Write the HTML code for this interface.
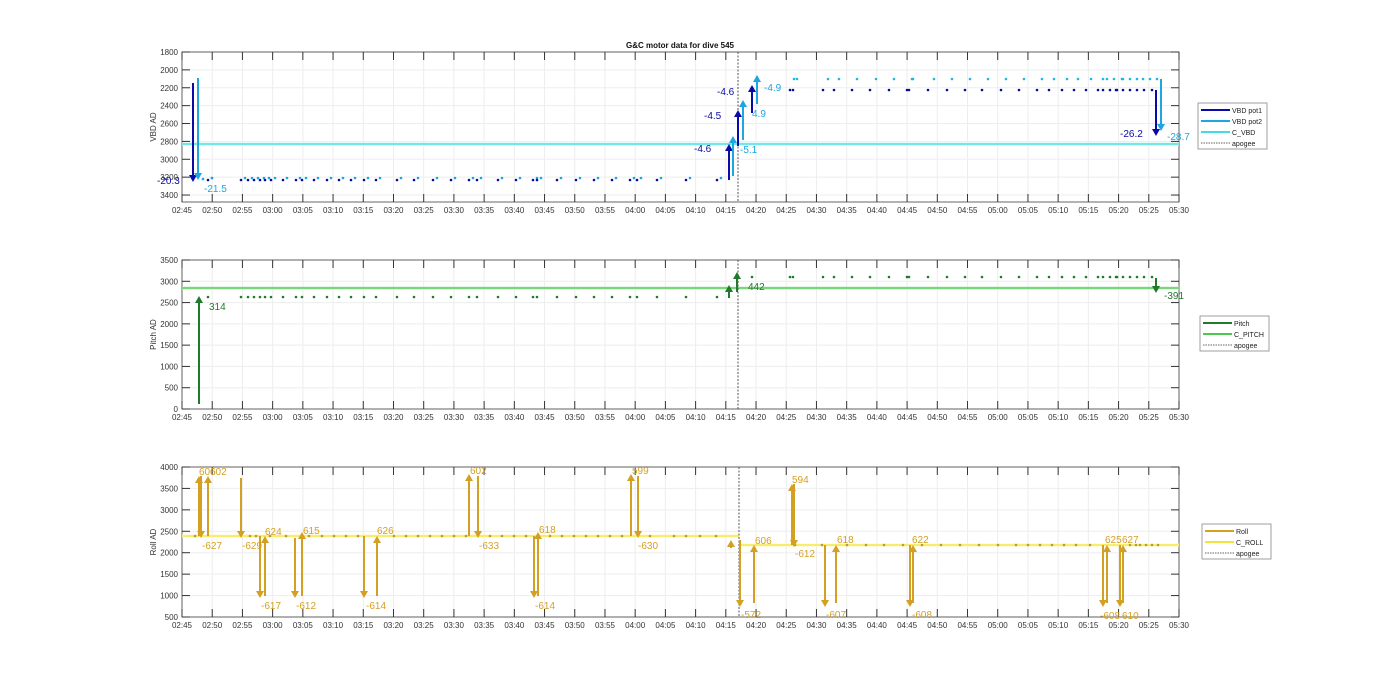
<!DOCTYPE html>
<html><head><meta charset="utf-8"><style>
html,body{margin:0;padding:0;background:#fff;}
svg{display:block;font-family:"Liberation Sans",sans-serif;}
</style></head><body>
<svg id="s" width="1400" height="693" viewBox="0 0 1400 693" xmlns="http://www.w3.org/2000/svg"></svg>
<script>
var S=document.getElementById('s'),h='';
var X0=182,X1=1179,PM=(X1-X0)/165;
function ln(x1,y1,x2,y2,c,w,extra){h+='<line x1="'+x1+'" y1="'+y1+'" x2="'+x2+'" y2="'+y2+'" stroke="'+c+'" stroke-width="'+w+'" '+(extra||'')+'/>';}
function tx(x,y,t,c,sz,extra){h+='<text x="'+x+'" y="'+y+'" fill="'+c+'" font-size="'+sz+'" '+(extra||'')+'>'+t+'</text>';}
function panel(top,bot,yt,ylab){
  for(var i=0;i<=33;i++){var x=X0+i*5*PM;ln(x,top,x,bot,'#ededed',1);}
  yt.forEach(function(t){ln(X0,t[1],X1,t[1],'#ededed',1);});
  h+='<rect x="'+X0+'" y="'+top+'" width="'+(X1-X0)+'" height="'+(bot-top)+'" fill="none" stroke="#262626" stroke-width="1" opacity="0.7"/>';
  for(var i=0;i<=33;i++){var x=X0+i*5*PM;ln(x,bot,x,bot-8,'#333',1);ln(x,top,x,top+8,'#333',1);
    var m=165+i*5,hh=Math.floor(m/60),mm=m%60;
    tx(x,bot+11,'0'+hh+':'+(mm<10?'0':'')+mm,'#333',8,'text-anchor="middle"');}
  yt.forEach(function(t){ln(X0,t[1],X0+8,t[1],'#333',1);ln(X1,t[1],X1-8,t[1],'#333',1);tx(X0-4,t[1]+3,t[0],'#333',8,'text-anchor="end"');});
  tx(156,(top+bot)/2,ylab,'#333',8,'text-anchor="middle" transform="rotate(-90 156 '+(top+bot)/2+')"');
}
function arrow(x,y1,y2,c,label,lx,ly){
  var d=y2<y1?1:-1;ln(x,y1,x,y2+d*6,c,2);
  h+='<polygon points="'+(x-4)+','+(y2+d*7)+' '+(x+4)+','+(y2+d*7)+' '+x+','+y2+'" fill="'+c+'"/>';
  if(label)tx(lx,ly,label,c,10);
}
function dot(x,y,c){h+='<circle cx="'+x+'" cy="'+y+'" r="1.3" fill="'+c+'"/>';}
var early=[208,241,248,254,260,265,271,283,296,302,314,327,339,351,364,376,397,414,433,451,469,477,498,516,533,537,557,576,594,612,630,637,657,686,717];
var late1=[790,793,823,834,852,870,889,907,909,928,947,965,982,1001,1019,1037,1049,1062,1074,1086,1098,1103,1110,1116,1117,1123,1130,1137,1144,1152];
var late2=[794,797,828,839,857,876,894,912,913,934,952,970,988,1006,1024,1042,1054,1067,1078,1091,1103,1107,1114,1122,1123,1130,1137,1143,1150,1157];
tx(680,48,'G&amp;C motor data for dive 545','#111',8,'text-anchor="middle" font-weight="bold"');
var yt1=[];for(var v=1800;v<=3400;v+=200)yt1.push([v,52+(v-1800)*0.0894]);
panel(52,202,yt1,'VBD AD');
ln(X0,144,X1,144,'#c8f6f7',3);ln(X0,144,X1,144,'#3fdde4',1.2);
ln(738,52,738,202,'#555',1,'stroke-dasharray="2,1.5"');
early.forEach(function(x){dot(x,180,'#0a0a9a');dot(x+4,178,'#19a6e0');});
dot(203,179,'#19a6e0');dot(212,178,'#19a6e0');
late1.forEach(function(x){dot(x,90,'#0a0a9a');});
late2.forEach(function(x){dot(x,79,'#19b8e8');});
arrow(193,83,182,'#0a0aa8','-20.3',157,184);
arrow(198,78,180,'#1ea6e0','-21.5',204,192);
arrow(729,180,144,'#0a0aa8','-4.6',694,152);
arrow(733,176,136,'#1ea6e0','-5.1',740,153);
arrow(738,146,110,'#0a0aa8','-4.5',704,119);
arrow(743,140,100,'#1ea6e0','4.9',752,117);
arrow(752,113,85,'#0a0aa8','-4.6',717,95);
arrow(757,104,75,'#1ea6e0','-4.9',764,91);
arrow(1156,90,136,'#0a0aa8','-26.2',1120,137);
arrow(1161,79,131,'#1ea6e0','-28.7',1167,140);
function legend(x,y,items){var hgt=items.length*11+2;h+='<rect x="'+x+'" y="'+y+'" width="69" height="'+hgt+'" fill="#fff" stroke="#888" stroke-width="0.8"/>';
 items.forEach(function(it,i){var yy=y+7+i*11;ln(x+3,yy,x+32,yy,it[1],it[2],it[3]||'');tx(x+34,yy+3,it[0],'#222',7);});}
legend(1198,103,[['VBD pot1','#0a0aa8',2],['VBD pot2','#1ea6e0',2],['C_VBD','#3fdde4',2],['apogee','#666',1,'stroke-dasharray="1.5,1"']]);
var yt2=[];for(var v=0;v<=3500;v+=500)yt2.push([v,409-v*0.04257]);
panel(260,409,yt2,'Pitch AD');
ln(X0,288,X1,288,'#c6efc6',3);ln(X0,288,X1,288,'#4cc84c',1.2);
ln(738,260,738,409,'#555',1,'stroke-dasharray="2,1.5"');
early.forEach(function(x){dot(x,297,'#1f7a2a');});
[752].concat(late1.slice(0)).forEach(function(x){dot(x,277,'#1f7a2a');});
arrow(199,404,296,'#1f7a2a','314',209,310);
arrow(729,298,285,'#1f7a2a');
arrow(737,292,272,'#1f7a2a','442',748,290);
arrow(1156,278,293,'#1f7a2a','-391',1164,299);
legend(1200,316,[['Pitch','#1f7a2a',2],['C_PITCH','#4cc84c',2],['apogee','#666',1,'stroke-dasharray="1.5,1"']]);
var yt3=[];for(var v=500;v<=4000;v+=500)yt3.push([v,617-(v-500)*0.04286]);
panel(467,617,yt3,'Roll AD');
ln(X0,536,739,536,'#fff8c0',3);ln(X0,536,739,536,'#f2e43a',1.2);
ln(739,545,X1,545,'#fff8c0',3);ln(739,545,X1,545,'#f2e43a',1.2);
ln(739,467,739,617,'#555',1,'stroke-dasharray="2,1.5"');
[195,250,256,270,286,309,322,334,346,358,394,406,418,430,442,454,466,490,502,514,526,550,562,574,586,598,610,622,650,674,686,700,716].forEach(function(x){dot(x,536,'#b89a3a');});
[795,822,847,866,884,903,922,941,960,979,998,1016,1028,1040,1052,1064,1076,1090,1130,1136,1140,1146,1152,1158].forEach(function(x){dot(x,545,'#b89a3a');});
var R='#d4a023';
arrow(199,536,476,R,'606',199,475);
arrow(201,476,538,R,'-627',202,549);
arrow(208,536,476,R,'602',210,475);
arrow(241,478,538,R,'-629',242,549);
arrow(260,536,598,R,'-617',261,609);
arrow(265,596,536,R,'624',265,535);
arrow(295,538,598,R,'-612',296,609);
arrow(302,596,532,R,'615',303,534);
arrow(364,536,598,R,'-614',366,609);
arrow(377,596,536,R,'626',377,534);
arrow(469,536,474,R,'602',470,474);
arrow(478,476,538,R,'-633',479,549);
arrow(534,536,598,R,'-614',535,609);
arrow(538,596,532,R,'618',539,533);
arrow(631,536,474,R,'599',632,474);
arrow(638,476,538,R,'-630',638,549);
arrow(731,548,540,R);
arrow(740,540,607,R,'-572',741,618);
arrow(754,603,545,R,'606',755,544);
arrow(792,545,484,R,'594',792,483);
arrow(794,484,547,R,'-612',795,557);
arrow(825,545,607,R,'-607',826,618);
arrow(836,603,545,R,'618',837,543);
arrow(910,545,607,R,'-608',912,618);
arrow(913,603,545,R,'622',912,543);
arrow(1103,545,607,R,'-608',1100,619);
arrow(1107,603,545,R,'625',1105,543);
arrow(1120,545,607,R,'610',1122,619);
arrow(1123,603,545,R,'627',1122,543);
legend(1202,524,[['Roll',R,2],['C_ROLL','#f2e43a',2],['apogee','#666',1,'stroke-dasharray="1.5,1"']]);
S.innerHTML=h;
</script>
</body></html>
